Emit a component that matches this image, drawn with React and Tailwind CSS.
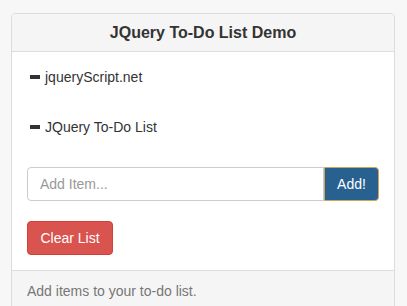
const items = ['jqueryScript.net', 'JQuery To-Do List'];

function Minus() {
  return <span className="inline-block w-[10px] h-[4px] bg-[#333] mr-[5px] ml-[3px]" />;
}

export default function App() {
  return (
    <div className="min-h-[306px] bg-[#f7f7f7] pt-[13px] px-[11px] text-[14px] leading-[20px] text-[#333]" style={{ fontFamily: '"Liberation Sans", Arial, sans-serif' }}>
      <div className="w-[384px] bg-white border border-[#ddd] rounded-[4px] overflow-hidden">
        {/* Heading */}
        <div className="bg-[#f5f5f5] border-b border-[#ddd] py-[10px] px-[15px] text-center">
          <h3 className="text-[16px] leading-[17px] font-bold text-[#333]">JQuery To-Do List Demo</h3>
        </div>

        {/* Body */}
        <div className="p-[15px]">
          <ul>
            {items.map((item) => (
              <li key={item} className="h-[20px] mb-[30px] flex items-center">
                <Minus />
                <span>{item}</span>
              </li>
            ))}
          </ul>

          <div className="flex h-[34px]">
            <input
              className="flex-1 min-w-0 border border-[#ccc] rounded-l-[4px] px-[12px] text-[14px] text-[#555] placeholder:text-[#999] outline-none"
              placeholder="Add Item..."
            />
            <button className="w-[55px] bg-[#286090] border border-[#c9a64f] rounded-r-[4px] text-white text-[14px]">
              Add!
            </button>
          </div>

          <button className="mt-[20px] h-[34px] w-[86px] bg-[#d9534f] border border-[#d43f3a] rounded-[4px] text-white text-[14px]">
            Clear List
          </button>
        </div>

        {/* Footer */}
        <div className="bg-[#f5f5f5] border-t border-[#ddd] py-[10px] px-[15px] h-[40px] text-[#777]">
          Add items to your to-do list.
        </div>
      </div>
    </div>
  );
}
